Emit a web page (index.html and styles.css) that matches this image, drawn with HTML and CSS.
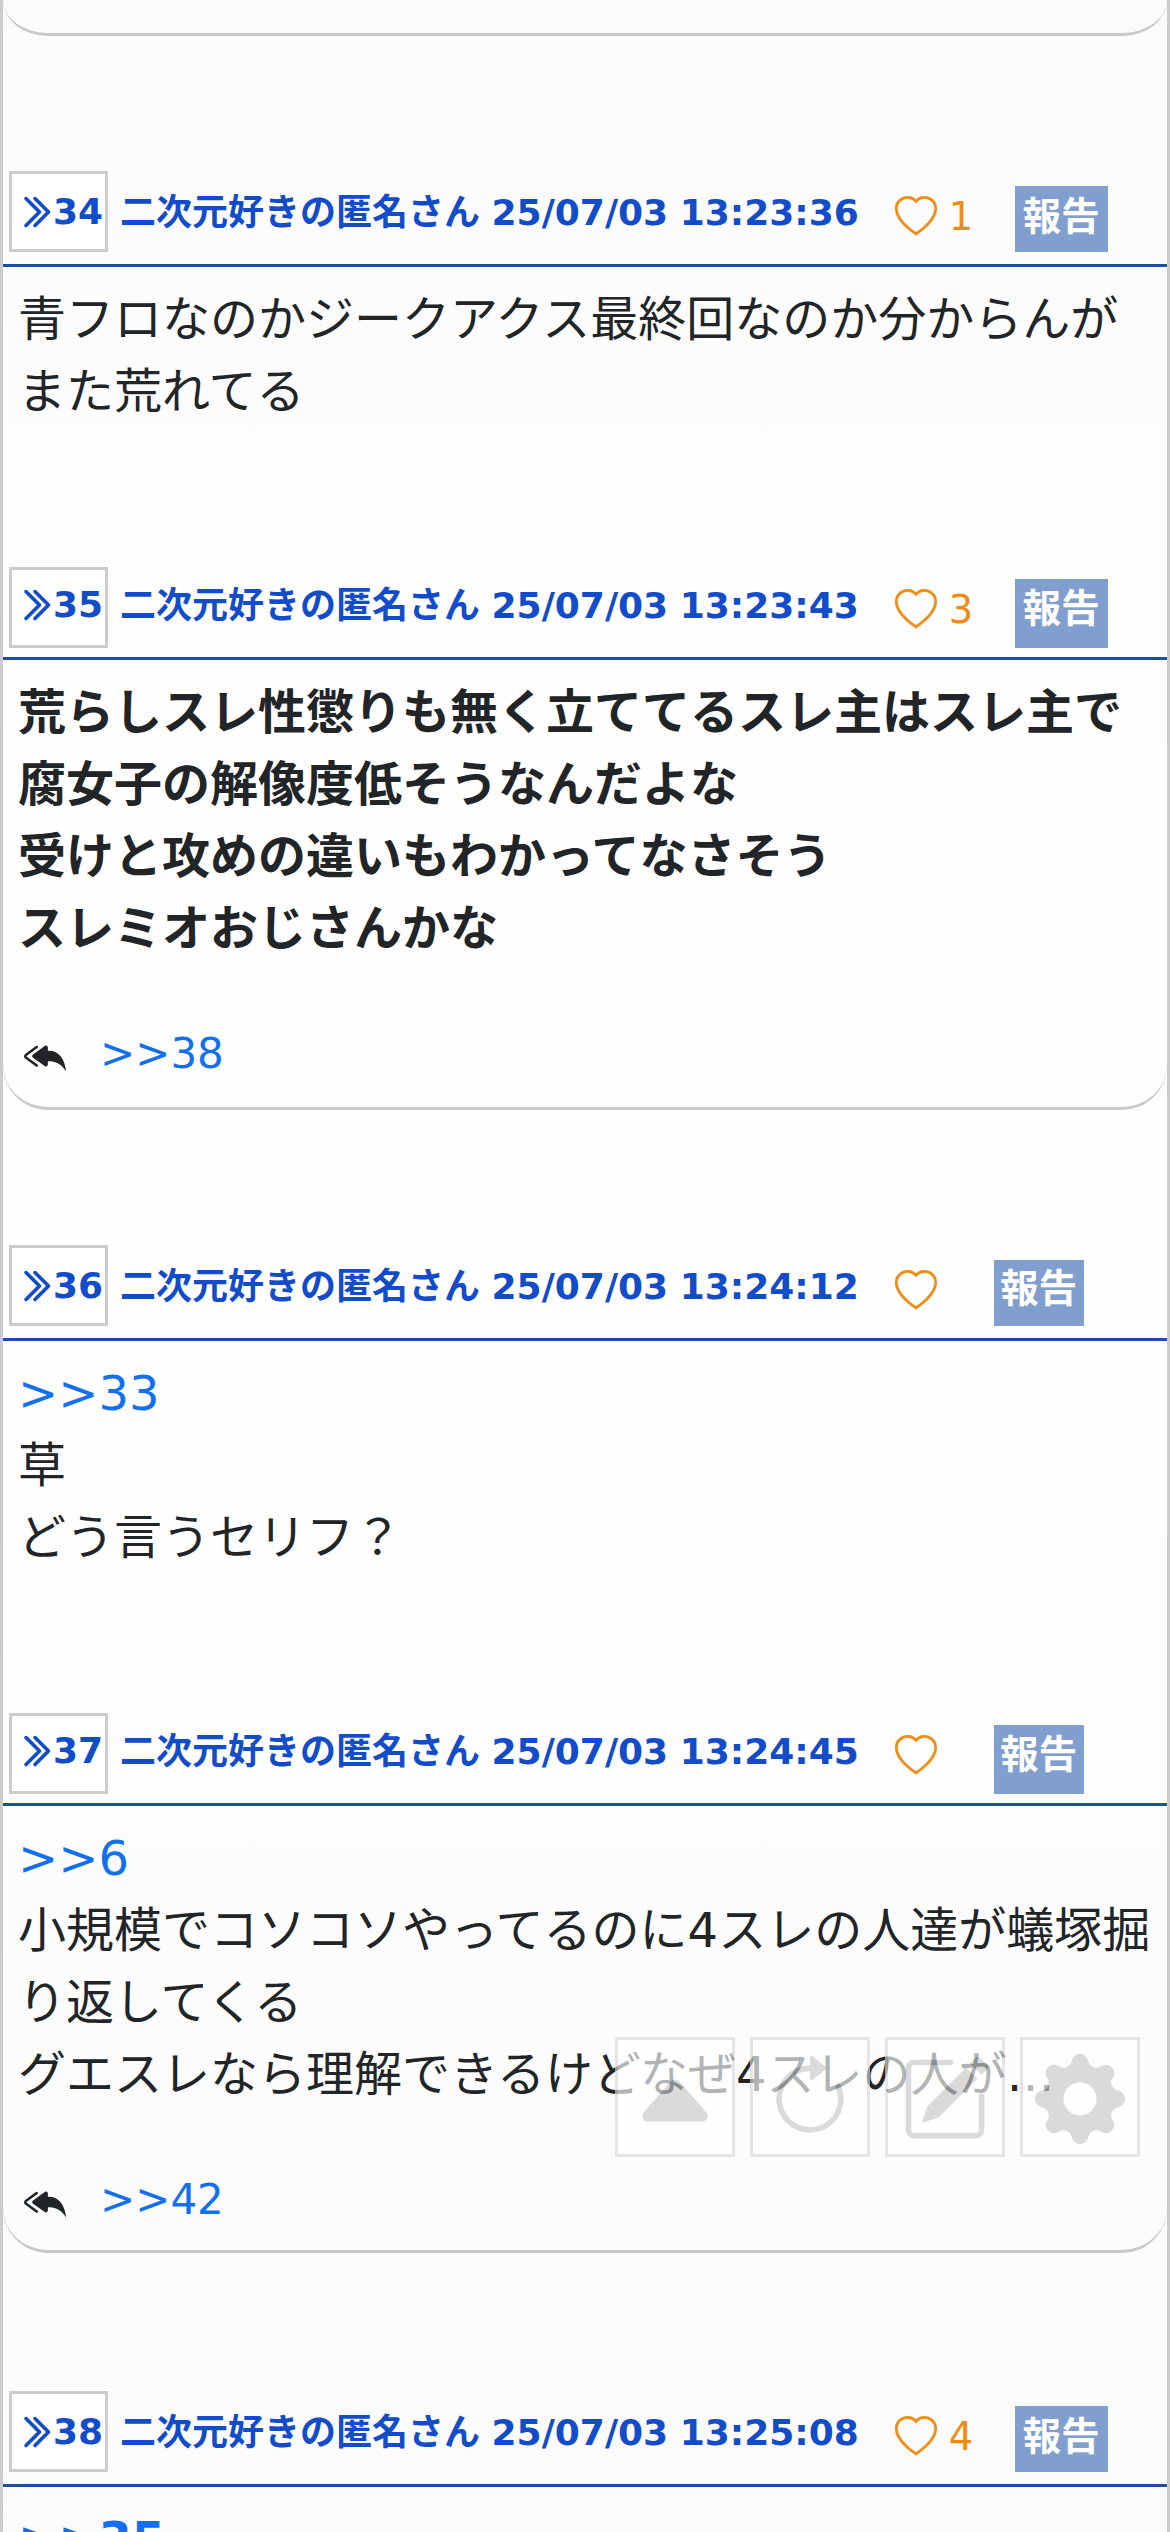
FILE: index.html
```html
<!DOCTYPE html>
<html lang="ja">
<head>
<meta charset="utf-8">
<title>スレッド</title>
<link rel="stylesheet" href="styles.css">
</head>
<body>
<svg class="sprite" aria-hidden="true">
  <symbol id="quote" viewBox="0 0 16 16"><path d="M3.646 1.646a.5.5 0 0 1 .708 0l6 6a.5.5 0 0 1 0 .708l-6 6a.5.5 0 0 1-.708-.708L9.293 8 3.646 2.354a.5.5 0 0 1 0-.708"/><path d="M7.646 1.646a.5.5 0 0 1 .708 0l6 6a.5.5 0 0 1 0 .708l-6 6a.5.5 0 0 1-.708-.708L13.293 8 7.646 2.354a.5.5 0 0 1 0-.708"/></symbol>
  <symbol id="heart" viewBox="0 0 16 16"><path d="m8 2.748-.717-.737C5.6.281 2.514.878 1.4 3.053c-.523 1.023-.641 2.5.314 4.385.92 1.815 2.834 3.989 6.286 6.357 3.452-2.368 5.365-4.542 6.286-6.357.955-1.886.838-3.362.314-4.385C13.486.878 10.4.28 8.717 2.01zM8 15C-7.333 4.868 3.279-3.04 7.824 1.143q.09.083.176.171a3 3 0 0 1 .176-.17C12.72-3.042 23.333 4.867 8 15"/></symbol>
  <symbol id="reply" viewBox="0 0 16 16"><path d="M8.021 11.9 3.453 8.62a.72.72 0 0 1 0-1.238L8.021 4.1a.716.716 0 0 1 1.079.619V6c1.5 0 6 0 7 8-2.5-4.5-7-4-7-4v1.281c0 .56-.606.898-1.079.62z"/><path d="M5.232 4.293a.5.5 0 0 1-.106.7L1.114 7.945l-.042.028a.147.147 0 0 0 0 .252l.042.028 4.012 2.954a.5.5 0 1 1-.593.805L.539 9.073a1.147 1.147 0 0 1 0-1.946l3.994-2.94a.5.5 0 0 1 .699.106"/></symbol>
  <symbol id="up" viewBox="0 0 16 16"><path d="m7.247 4.86-4.796 5.481c-.566.647-.106 1.659.753 1.659h9.592a1 1 0 0 0 .753-1.659l-4.796-5.48a1 1 0 0 0-1.506 0z"/></symbol>
  <symbol id="reload" viewBox="0 0 16 16"><path d="M8 3a5 5 0 1 0 4.546 2.914.5.5 0 0 1 .908-.417A6 6 0 1 1 8 2z"/><path d="M8 4.466V.534a.25.25 0 0 1 .41-.192l2.36 1.966c.12.1.12.284 0 .384L8.41 4.658A.25.25 0 0 1 8 4.466"/></symbol>
  <symbol id="write" viewBox="0 0 16 16"><path d="M15.502 1.94a.5.5 0 0 1 0 .706L14.459 3.69l-2-2L13.502.646a.5.5 0 0 1 .707 0l1.293 1.293zm-1.75 2.456-2-2L4.939 9.21a.5.5 0 0 0-.121.196l-.805 2.414a.25.25 0 0 0 .316.316l2.414-.805a.5.5 0 0 0 .196-.12l6.813-6.814z"/><path d="M1 13.5A1.5 1.5 0 0 0 2.5 15h11a1.5 1.5 0 0 0 1.5-1.5v-6a.5.5 0 0 0-1 0v6a.5.5 0 0 1-.5.5h-11a.5.5 0 0 1-.5-.5v-11a.5.5 0 0 1 .5-.5H9a.5.5 0 0 0 0-1H2.5A1.5 1.5 0 0 0 1 2.5z"/></symbol>
  <symbol id="gear" viewBox="0 0 16 16"><path d="M9.405 1.05c-.413-1.4-2.397-1.4-2.81 0l-.1.34a1.464 1.464 0 0 1-2.105.872l-.31-.17c-1.283-.698-2.686.705-1.987 1.987l.169.311c.446.82.023 1.841-.872 2.105l-.34.1c-1.4.413-1.4 2.397 0 2.81l.34.1a1.464 1.464 0 0 1 .872 2.105l-.17.31c-.698 1.283.705 2.686 1.987 1.987l.311-.169a1.464 1.464 0 0 1 2.105.872l.1.34c.413 1.4 2.397 1.4 2.81 0l.1-.34a1.464 1.464 0 0 1 2.105-.872l.31.17c1.283.698 2.686-.705 1.987-1.987l-.169-.311a1.464 1.464 0 0 1 .872-2.105l.34-.1c1.4-.413 1.4-2.397 0-2.81l-.34-.1a1.464 1.464 0 0 1-.872-2.105l.17-.31c.698-1.283-.705-2.686-1.987-1.987l-.311.169a1.464 1.464 0 0 1-2.105-.872zM8 10.93a2.929 2.929 0 1 1 0-5.86 2.929 2.929 0 0 1 0 5.858z"/></symbol>
</svg>
<main class="thread">
  <div class="card-end"></div>

  <article class="post">
    <header class="head">
      <a class="num"><svg><use href="#quote"/></svg>34</a>
      <span class="name">二次元好きの匿名さん 25/07/03 13:23:36</span>
      <span class="like"><svg><use href="#heart"/></svg>1</span>
      <button class="report">報告</button>
    </header>
    <p class="text">青フロなのかジークアクス最終回なのか分からんが<br>また荒れてる</p>
  </article>

  <article class="post closed">
    <header class="head low">
      <a class="num"><svg><use href="#quote"/></svg>35</a>
      <span class="name">二次元好きの匿名さん 25/07/03 13:23:43</span>
      <span class="like"><svg><use href="#heart"/></svg>3</span>
      <button class="report">報告</button>
    </header>
    <p class="text strong">荒らしスレ性懲りも無く立ててるスレ主はスレ主で<br>腐女子の解像度低そうなんだよな<br>受けと攻めの違いもわかってなさそう<br>スレミオおじさんかな</p>
    <div class="replies"><svg><use href="#reply"/></svg><a>&gt;&gt;38</a></div>
  </article>

  <article class="post">
    <header class="head">
      <a class="num"><svg><use href="#quote"/></svg>36</a>
      <span class="name">二次元好きの匿名さん 25/07/03 13:24:12</span>
      <span class="like none"><svg><use href="#heart"/></svg></span>
      <button class="report">報告</button>
    </header>
    <p class="text"><a>&gt;&gt;33</a><br>草<br>どう言うセリフ？</p>
  </article>

  <article class="post closed short">
    <header class="head low">
      <a class="num"><svg><use href="#quote"/></svg>37</a>
      <span class="name">二次元好きの匿名さん 25/07/03 13:24:45</span>
      <span class="like none"><svg><use href="#heart"/></svg></span>
      <button class="report">報告</button>
    </header>
    <p class="text"><a>&gt;&gt;6</a><br>小規模でコソコソやってるのに4スレの人達が蟻塚掘<br>り返してくる<br>グエスレなら理解できるけどなぜ4スレの人が…</p>
    <div class="replies"><svg><use href="#reply"/></svg><a>&gt;&gt;42</a></div>
  </article>

  <article class="post">
    <header class="head tall">
      <a class="num"><svg><use href="#quote"/></svg>38</a>
      <span class="name">二次元好きの匿名さん 25/07/03 13:25:08</span>
      <span class="like"><svg><use href="#heart"/></svg>4</span>
      <button class="report">報告</button>
    </header>
    <p class="text strong"><a>&gt;&gt;35</a></p>
  </article>
</main>
<nav class="tools">
  <button class="tool"><svg><use href="#up"/></svg></button>
  <button class="tool"><svg><use href="#reload"/></svg></button>
  <button class="tool"><svg><use href="#write"/></svg></button>
  <button class="tool"><svg><use href="#gear"/></svg></button>
</nav>
</body>
</html>
```

FILE: styles.css
```css
* { box-sizing: border-box; }
html, body { margin: 0; height: 2532px; overflow: hidden; }
body {
  font-family: "DejaVu Sans", "Noto Sans CJK JP", sans-serif;
  color: #222528;
}
svg { display: block; fill: currentColor; flex: none; }
.sprite { display: none; }
button { font-family: inherit; border-radius: 0; }

.thread {
  height: 2532px;
  overflow: hidden;
  border-left: 3px solid #ccc;
  border-right: 3px solid #ccc;
  background: linear-gradient(#fbfbfb, #fefefe 30%, #fefefe 60%, #fcfcfc 80%, #fbfbfb);
}
.card-end, .closed {
  border-bottom: 3px solid #c8c8c8;
  border-radius: 0 0 45px 45px;
}
.card-end { height: 36px; border-bottom-left-radius: 45px 36px; border-bottom-right-radius: 45px 36px; }
.closed { height: 684px; }
.short { height: 681px; }

/* post header */
.head {
  display: flex;
  align-items: flex-end;
  height: 231px;
  padding: 0 0 12px 6px;
  border-bottom: 3px solid #1d4da4;
  color: #124cc8;
  font-size: 36px;
  font-weight: bold;
  line-height: 42px;
  white-space: nowrap;
}
.low, .tall { height: 234px; }
.low { padding-bottom: 9px; }
.num {
  display: flex;
  align-items: center;
  width: 99px;
  height: 81px;
  padding-left: 5px;
  border: 3px solid #ccc;
  background: #fff;
}
.low .num { padding-bottom: 5px; }
.num svg { width: 36px; height: 36px; stroke: currentColor; stroke-width: .6; }
.name { margin-left: 12px; padding-bottom: 18px; word-spacing: -1px; }
.low .name { padding-bottom: 21px; }
.like {
  display: flex;
  align-items: center;
  gap: 12px;
  width: 120px;
  margin-left: 36px;
  padding-bottom: 14px;
  color: #f08c14;
  font-size: 38.4px;
  font-weight: normal;
}
.low .like { padding-bottom: 17px; }
.like svg { width: 42px; height: 42px; stroke: currentColor; stroke-width: .1; }
.none { width: 99px; }
.report {
  width: 93px;
  height: 66px;
  padding: 0 0 4px;
  border: 0;
  background: #819fce;
  color: #fff;
  font-size: 38.4px;
  font-weight: bold;
  line-height: 60px;
}
.none + .report { width: 90px; padding-bottom: 8px; line-height: 58px; }
.low .report { height: 69px; padding-bottom: 9px; }

/* post body */
.text {
  margin: 0 0 -1px;
  padding: 16px 0 0 15px;
  font-size: 48px;
  line-height: 72px;
  white-space: nowrap;
}
.post { display: flow-root; }
.strong { font-weight: bold; }
.text a, .replies a { color: #1270ee; }
.replies {
  display: flex;
  align-items: center;
  gap: 34px;
  padding: 61px 0 0 21px;
  font-size: 42px;
  line-height: 60px;
}
.replies svg { width: 42px; height: 42px; margin-top: 4px; }

/* floating tool buttons */
.tools {
  position: fixed;
  right: 30px;
  top: 2037px;
  display: flex;
  gap: 15px;
  opacity: .65;
}
.tool {
  width: 120px;
  height: 120px;
  padding: 3px 0 0 12px;
  border: 3px solid #d9d9d9;
  background: #fff;
  color: #c8c8c8;
}
.tool svg { width: 90px; height: 90px; }
```
